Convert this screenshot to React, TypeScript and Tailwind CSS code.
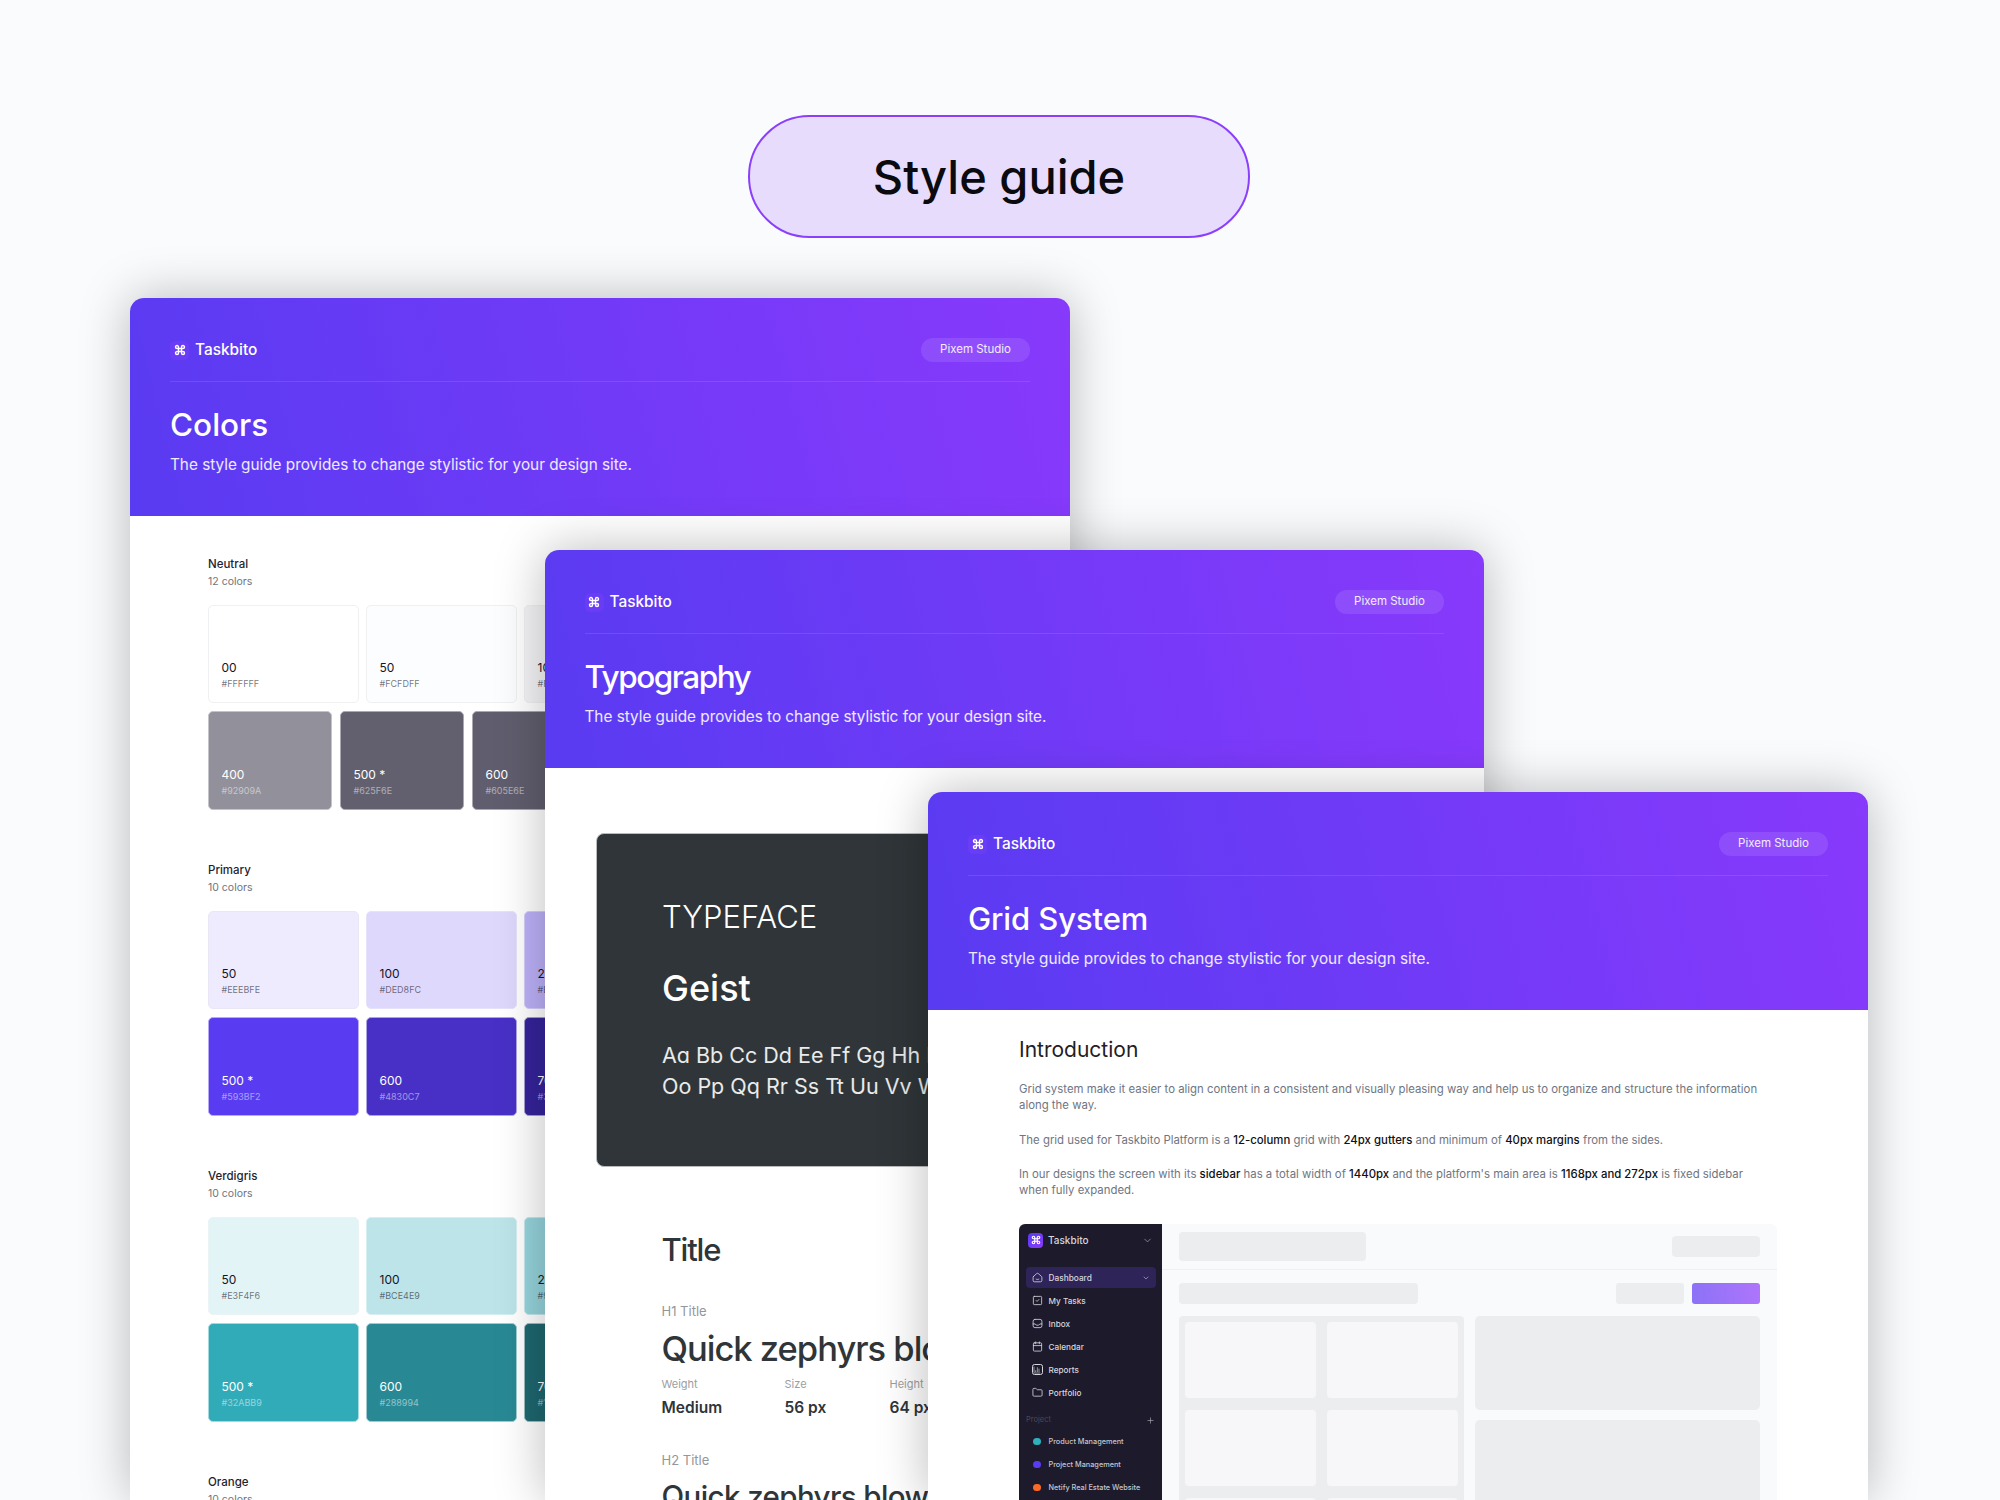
import React from "react";
import { Calendar, ChevronDown, Folder, Plus, SquareCheck, ChartColumn, Command } from "lucide-react";

const font = "font-['Inter','Liberation_Sans',sans-serif]";

function Header({ title, titleClass }: { title: string; titleClass: string }) {
  return (
    <div className="h-[218px] shrink-0 bg-[linear-gradient(76deg,#593BF2_0%,#8839FB_100%)] px-10 text-white">
      <div className="flex h-[84px] items-center justify-between border-b border-white/10 pt-[21px]">
        <div className="flex items-center gap-[6px]">
          <span className="flex h-[19px] w-[19px] items-center justify-center rounded-[5px] bg-[#6a3cf6]">
            <Command size={12} strokeWidth={2.8} className="text-white" />
          </span>
          <span className="text-[15.400px] leading-5 font-medium">Taskbito</span>
        </div>
        <span className="flex h-[24px] w-[109px] items-center justify-center rounded-full bg-white/10 text-[11.500px] text-white/90">Pixem Studio</span>
      </div>
      <h2 className={`mt-[23px] leading-10 font-[450] ${titleClass}`}>{title}</h2>
      <p className="mt-[10px] text-[15.300px] leading-5 text-white/90">The style guide provides to change stylistic for your design site.</p>
    </div>
  );
}

type Sw = { n: string; h: string; bg: string; dark: boolean };

function Swatch({ s, w }: { s: Sw; w: string }) {
  return (
    <div className={`flex h-[98.500px] shrink-0 flex-col justify-end rounded-[5px] border pb-[12px] pl-[12.500px] ${w} ${s.bg}`}>
      <span className={`text-[12px] leading-4 ${s.dark ? "text-white" : "text-[#15151f]"}`}>{s.n}</span>
      <span className={`mt-[2px] text-[9px] leading-3 ${s.dark ? "text-white/50" : "text-[#15151f]/60"}`}>{s.h}</span>
    </div>
  );
}

function Section({ name, count, rows, row2 }: { name: string; count: string; rows: Sw[][]; row2?: boolean }) {
  return (
    <section className="mb-[52px]">
      <div className="text-[11.500px] leading-4 font-medium text-[#1e1e2e]">{name}</div>
      <div className="mt-[3.500px] text-[10.500px] leading-[14px] text-[#72727e]">{count}</div>
      <div className="mt-[15.500px] flex flex-col gap-2">
        <div className="flex gap-[7px]">
          {rows[0].map((s) => <Swatch key={s.n} s={s} w="w-[151px]" />)}
        </div>
        <div className={row2 ? "flex gap-2" : "flex gap-[7px]"}>
          {rows[1].map((s) => <Swatch key={s.n} s={s} w={row2 ? "w-[124px]" : "w-[151px]"} />)}
        </div>
      </div>
    </section>
  );
}

const neutral: Sw[][] = [
  [
    { n: "00", h: "#FFFFFF", bg: "bg-white border-[#eff0f2]", dark: false },
    { n: "50", h: "#FCFDFF", bg: "bg-[#fcfdff] border-[#eff0f2]", dark: false },
    { n: "100", h: "#F5F5F7", bg: "bg-[#f5f5f7] border-[#eff0f2]", dark: false },
  ],
  [
    { n: "400", h: "#92909A", bg: "bg-[#92909a] border-[#c4c3c9]", dark: true },
    { n: "500 *", h: "#625F6E", bg: "bg-[#625f6e] border-[#aaa8b0]", dark: true },
    { n: "600", h: "#605E6E", bg: "bg-[#605e6e] border-[#aaa8b0]", dark: true },
  ],
];
const primary: Sw[][] = [
  [
    { n: "50", h: "#EEEBFE", bg: "bg-[#eeebfe] border-[#e9e7f6]", dark: false },
    { n: "100", h: "#DED8FC", bg: "bg-[#ded8fc] border-[#e6e2fb]", dark: false },
    { n: "200", h: "#BDB1F9", bg: "bg-[#bdb1f9] border-[#d5cffa]", dark: false },
  ],
  [
    { n: "500 *", h: "#593BF2", bg: "bg-[#593bf2] border-[#b7abf8]", dark: true },
    { n: "600", h: "#4830C7", bg: "bg-[#4830c7] border-[#ada4e4]", dark: true },
    { n: "700", h: "#35239A", bg: "bg-[#35239a] border-[#a59ed4]", dark: true },
  ],
];
const verdigris: Sw[][] = [
  [
    { n: "50", h: "#E3F4F6", bg: "bg-[#e3f4f6] border-[#eaf3f5]", dark: false },
    { n: "100", h: "#BCE4E9", bg: "bg-[#bce4e9] border-[#d6eff2]", dark: false },
    { n: "200", h: "#96D4DC", bg: "bg-[#96d4dc] border-[#c6e8ec]", dark: false },
  ],
  [
    { n: "500 *", h: "#32ABB9", bg: "bg-[#32abb9] border-[#a4d9df]", dark: true },
    { n: "600", h: "#288994", bg: "bg-[#288994] border-[#a0ccd1]", dark: true },
    { n: "700", h: "#1E676F", bg: "bg-[#1e676f] border-[#9bbfc3]", dark: true },
  ],
];

const win = "absolute flex flex-col overflow-hidden rounded-t-[14px] bg-white shadow-[0_0_50px_rgba(0,0,0,0.27)]";

function HomeIco() {
  return (
    <svg viewBox="0 0 12 12" className="h-[11px] w-[11px]" fill="none" stroke="currentColor" strokeWidth="0.9" strokeLinejoin="round" strokeLinecap="round">
      <path d="M1.500 5 5 1.800a1.500 1.500 0 0 1 2 0L10.500 5a1 1 0 0 1 .3.8v3.400a1.500 1.500 0 0 1-1.500 1.500H2.700a1.500 1.500 0 0 1-1.500-1.500V5.800a1 1 0 0 1 .3-.8Z" />
      <path d="M4.500 7.800c.8.5 2.200.5 3 0" />
    </svg>
  );
}
function InboxIco() {
  return (
    <svg viewBox="0 0 12 12" className="h-[11px] w-[11px]" fill="none" stroke="currentColor" strokeWidth="0.9" strokeLinejoin="round" strokeLinecap="round">
      <rect x="1.200" y="1.500" width="9.600" height="9" rx="2" />
      <path d="M1.200 6.500h2.300l1.200 1.300h2.600l1.200-1.300h2.300" />
    </svg>
  );
}

const nav: { label: string; icon: React.ReactNode }[] = [
  { label: "My Tasks", icon: <SquareCheck size={11} strokeWidth={1.8} /> },
  { label: "Inbox", icon: <InboxIco /> },
  { label: "Calendar", icon: <Calendar size={11} strokeWidth={1.8} /> },
  { label: "Reports", icon: <span className="flex h-[11px] w-[11px] items-center justify-center rounded-[2.500px] border border-current"><ChartColumn size={8} strokeWidth={2} /></span> },
  { label: "Portfolio", icon: <Folder size={11} strokeWidth={1.8} /> },
];

const projects = [
  { label: "Product Management", dot: "bg-[#2fb0bc]" },
  { label: "Project Management", dot: "bg-[#593bf2]" },
  { label: "Netify Real Estate Website", dot: "bg-[#fb6a25]" },
];

function Dashboard() {
  return (
    <div className="mt-[26px] flex h-[300px] overflow-hidden rounded-t-[6px]">
      <aside className="w-[143px] shrink-0 bg-[#1c1a2b] text-[#d6d6dd]">
        <div className="flex h-[32px] items-center justify-between pr-[9px] pl-[9px]">
          <div className="flex items-center gap-[5px]">
            <span className="flex h-[15px] w-[15px] items-center justify-center rounded-[4px] bg-[linear-gradient(135deg,#593bf2,#8a3afc)]">
              <Command size={10} strokeWidth={2.8} className="text-white" />
            </span>
            <span className="text-[10px] leading-3 font-medium">Taskbito</span>
          </div>
          <ChevronDown size={11} strokeWidth={1.4} className="text-[#b5b5bf]" />
        </div>
        <div className="mt-[11px] flex flex-col gap-[2px] px-[6.500px]">
          <div className="flex h-[21px] items-center rounded-[4px] bg-[#2e2457] pr-[6px] pl-[6px]">
            <span className="flex w-[11px] justify-center"><HomeIco /></span>
            <span className="ml-[6px] flex-1 text-[8.300px] leading-3 font-medium">Dashboard</span>
            <ChevronDown size={8} strokeWidth={1.6} />
          </div>
          {nav.map((n) => (
            <div key={n.label} className="flex h-[21px] items-center pl-[6px]">
              <span className="flex w-[11px] justify-center">{n.icon}</span>
              <span className="ml-[6px] text-[8.200px] leading-3 font-medium">{n.label}</span>
            </div>
          ))}
        </div>
        <div className="mt-[11px] flex h-[12px] items-center justify-between pr-[7px] pl-[7px]">
          <span className="text-[7.500px] leading-3 text-[#4b4957]">Project</span>
          <Plus size={9} strokeWidth={1.6} className="text-[#b5b5bf]" />
        </div>
        <div className="mt-[5px] flex flex-col gap-[2px] px-[6.500px]">
          {projects.map((p) => (
            <div key={p.label} className="flex h-[21px] items-center pl-[6px]">
              <span className="flex w-[11px] justify-center"><span className={`h-[7.500px] w-[7.500px] rounded-full ${p.dot}`} /></span>
              <span className="ml-[6px] text-[7.300px] leading-3 font-medium text-[#c4c4cc]">{p.label}</span>
            </div>
          ))}
        </div>
      </aside>
      <div className="flex-1 bg-[#f9fafc]">
        <div className="flex h-[46px] items-center justify-between border-b border-[#f0f0f3] px-[17px]">
          <div className="h-[29px] w-[187px] rounded-[4px] bg-[#ecedef]" />
          <div className="h-[21px] w-[88px] rounded-[4px] bg-[#ecedef]" />
        </div>
        <div className="mt-[13px] flex items-center justify-between px-[17px]">
          <div className="h-[21px] w-[239px] rounded-[4px] bg-[#ecedef]" />
          <div className="flex gap-2">
            <div className="h-[21px] w-[68px] rounded-[3px] bg-[#ecedef]" />
            <div className="h-[21px] w-[68px] rounded-[3px] bg-[linear-gradient(80deg,#8b72f6,#ae75fb)]" />
          </div>
        </div>
        <div className="mt-[12px] flex gap-[11px] px-[17px]">
          <div className="grid h-[260px] w-[285px] shrink-0 grid-cols-2 gap-x-[11px] gap-y-[12px] rounded-[4px] bg-[#ecedef] p-[6px]">
            {[0, 1, 2, 3, 4, 5].map((i) => <div key={i} className="h-[76px] rounded-[4px] bg-[#f7f7f9]" />)}
          </div>
          <div className="flex w-[285px] shrink-0 flex-col gap-[10px]">
            <div className="h-[94px] rounded-[5px] bg-[#ecedef]" />
            <div className="h-[94px] rounded-[5px] bg-[#ecedef]" />
          </div>
        </div>
      </div>
    </div>
  );
}

function Metric({ label, value, w }: { label: string; value: string; w: string }) {
  return (
    <div className={`shrink-0 ${w}`}>
      <div className="text-[11px] leading-[14px] text-[#9b9ea1]">{label}</div>
      <div className="mt-[6px] text-[15.500px] leading-[22px] font-semibold whitespace-nowrap text-[#2f3538]">{value}</div>
    </div>
  );
}

export default function App() {
  return (
    <div className={`relative h-[1500px] w-[2000px] overflow-hidden bg-[#fafbfd] ${font}`}>
      <div className="flex justify-center pt-[114.500px] pr-[2px]">
        <div className="flex h-[123px] w-[502px] items-center justify-center rounded-full border-2 border-[#8a3ffc] bg-[#e7dcfb] pt-[2px] text-[47px] font-medium text-[#0a0a0f]">Style guide</div>
      </div>

      <div className={`${win} top-[298px] left-[130px] h-[1202px] w-[940px]`}>
        <Header title="Colors" titleClass="text-[31.500px]" />
        <div className="pt-[39.500px] pl-[78px]">
          <Section name="Neutral" count="12 colors" rows={neutral} row2 />
          <Section name="Primary" count="10 colors" rows={primary} />
          <Section name="Verdigris" count="10 colors" rows={verdigris} />
          <Section name="Orange" count="10 colors" rows={[[], []]} />
        </div>
      </div>

      <div className={`${win} top-[550px] left-[544.500px] h-[950px] w-[939.500px]`}>
        <Header title="Typography" titleClass="text-[31.500px] tracking-[-1.500px]" />
        <div className="ml-[51px] mt-[65px] h-[334px] w-[820px] shrink-0 rounded-[8px] border border-[#b9bbbc] bg-[#2f3538] pt-[64px] pl-[65.500px] text-white">
          <div className="text-[31px] leading-[38px] font-light whitespace-nowrap">TYPEFACE</div>
          <div className="mt-[30px] text-[36px] leading-[44px] font-medium">Geist</div>
          <div className="mt-[30px] text-[21.500px] leading-[31px] whitespace-nowrap text-white/90 [font-feature-settings:'cv11']">
            Aa Bb Cc Dd Ee Ff Gg Hh Ii Jj Kk Ll Mm Nn<br />Oo Pp Qq Rr Ss Tt Uu Vv Ww Xx Yy Zz
          </div>
        </div>
        <div className="mt-[63px] pl-[117px] text-[#2f3538]">
          <div className="text-[31px] leading-10 font-medium tracking-[-1.200px]">Title</div>
          <div className="mt-[33px] text-[13px] leading-4 text-[#93969a]">H1 Title</div>
          <div className="mt-[5px] mb-[1px] text-[34.500px] leading-[50px] font-medium tracking-[-1px] whitespace-nowrap">Quick zephyrs blow</div>
          <div className="mt-[3px] flex">
            <Metric label="Weight" value="Medium" w="w-[123px]" />
            <Metric label="Size" value="56 px" w="w-[105px]" />
            <Metric label="Height" value="64 px" w="w-[80px]" />
          </div>
          <div className="mt-[33px] text-[13px] leading-4 text-[#93969a]">H2 Title</div>
          <div className="mt-[6px] text-[29.500px] leading-[44px] font-medium tracking-[-0.600px] whitespace-nowrap">Quick zephyrs blow</div>
        </div>
      </div>

      <div className={`${win} top-[792px] left-[928px] h-[708px] w-[940px]`}>
        <Header title="Grid System" titleClass="text-[31px] tracking-[-0.100px]" />
        <div className="pt-[26px] pr-[91px] pl-[91px]">
          <h3 className="text-[21px] leading-7 font-normal text-[#1f2025]">Introduction</h3>
          <div className="text-[11.380px] leading-4 text-[#6f7582]">
            <p className="mt-[17px]">Grid system make it easier to align content in a consistent and visually pleasing way and help us to organize and structure the information<br />along the way.</p>
            <p className="mt-[19px]">The grid used for Taskbito Platform is a <b className="font-medium text-[#0f0f14]">12-column</b> grid with <b className="font-medium text-[#0f0f14]">24px gutters</b> and minimum of <b className="font-medium text-[#0f0f14]">40px margins</b> from the sides.</p>
            <p className="mt-[18px]">In our designs the screen with its <b className="font-medium text-[#0f0f14]">sidebar</b> has a total width of <b className="font-medium text-[#0f0f14]">1440px</b> and the platform's main area is <b className="font-medium text-[#0f0f14]">1168px and 272px</b> is fixed sidebar<br />when fully expanded.</p>
          </div>
          <Dashboard />
        </div>
      </div>
    </div>
  );
}
